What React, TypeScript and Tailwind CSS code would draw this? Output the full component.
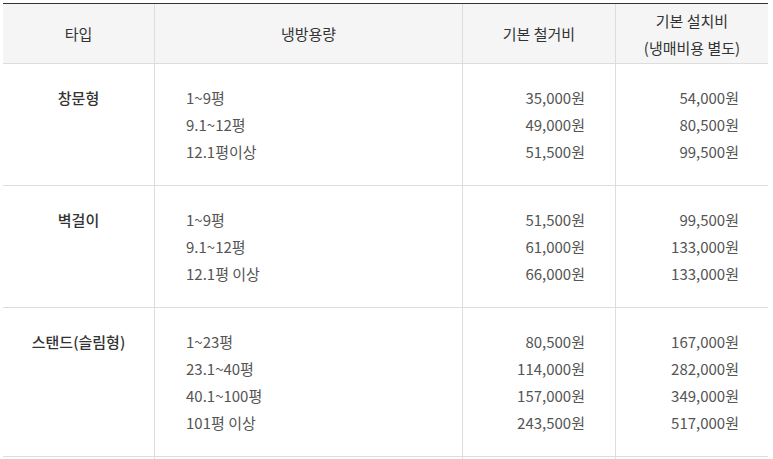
const rows = [
  {
    type: '창문형',
    items: [
      ['1~9평', '35,000원', '54,000원'],
      ['9.1~12평', '49,000원', '80,500원'],
      ['12.1평이상', '51,500원', '99,500원'],
    ],
  },
  {
    type: '벽걸이',
    items: [
      ['1~9평', '51,500원', '99,500원'],
      ['9.1~12평', '61,000원', '133,000원'],
      ['12.1평 이상', '66,000원', '133,000원'],
    ],
  },
  {
    type: '스탠드(슬림형)',
    items: [
      ['1~23평', '80,500원', '167,000원'],
      ['23.1~40평', '114,000원', '282,000원'],
      ['40.1~100평', '157,000원', '349,000원'],
      ['101평 이상', '243,500원', '517,000원'],
    ],
  },
];

export default function App() {
  return (
    <div
      className="bg-white w-[773px] h-[459px] overflow-hidden pt-[3px] pl-[3px]"
      style={{ fontFamily: '"Noto Sans CJK KR", "Noto Sans", sans-serif' }}
    >
      <div className="w-[765px] border-t border-[#333]">
        {/* header */}
        <div className="grid grid-cols-[152px_308px_153px_152px] h-[60px] bg-[#f5f5f6] border-b border-[#ddd] text-[15px] text-[#333] leading-[27px]">
          <div className="flex items-center justify-center border-r border-[#ddd]">타입</div>
          <div className="flex items-center justify-center border-r border-[#ddd]">냉방용량</div>
          <div className="flex items-center justify-center border-r border-[#ddd]">기본 철거비</div>
          <div className="flex flex-col items-center justify-center">
            <span>기본 설치비</span>
            <span>(냉매비용 별도)</span>
          </div>
        </div>

        {rows.map((row) => (
          <div
            key={row.type}
            className="grid grid-cols-[152px_308px_153px_152px] border-b border-[#ddd] text-[15px] leading-[27px]"
          >
            <div className="py-5 text-center text-[#333] font-medium border-r border-[#ddd]">{row.type}</div>
            <div className="py-5 pl-[31px] text-[#555] border-r border-[#ddd]">
              {row.items.map((it) => (
                <div key={it[0]}>{it[0]}</div>
              ))}
            </div>
            <div className="py-5 pr-[30px] text-right text-[#555] border-r border-[#ddd]">
              {row.items.map((it) => (
                <div key={it[0]}>{it[1]}</div>
              ))}
            </div>
            <div className="py-5 pr-[29px] text-right text-[#555]">
              {row.items.map((it) => (
                <div key={it[0]}>{it[2]}</div>
              ))}
            </div>
          </div>
        ))}
        <div className="grid grid-cols-[152px_308px_153px_152px] h-[10px]">
          <div className="border-r border-[#ddd]" />
          <div className="border-r border-[#ddd]" />
          <div className="border-r border-[#ddd]" />
          <div />
        </div>
      </div>
    </div>
  );
}
